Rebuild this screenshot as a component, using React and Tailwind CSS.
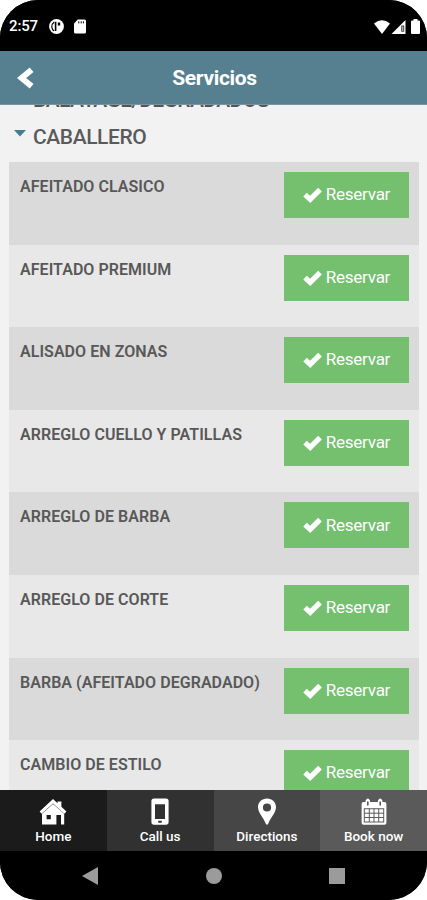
import React from 'react';

const SERVICES = [
  'AFEITADO CLASICO',
  'AFEITADO PREMIUM',
  'ALISADO EN ZONAS',
  'ARREGLO CUELLO Y PATILLAS',
  'ARREGLO DE BARBA',
  'ARREGLO DE CORTE',
  'BARBA (AFEITADO DEGRADADO)',
  'CAMBIO DE ESTILO'
];

const HomeIcon = () => (
  <svg width="28" height="28" viewBox="0 0 28 28" fill="#fff">
    <path d="M14 1 L18.5 5.2 V3.4 H22.4 V8.8 L27.4 13.4 L25.4 15.8 L14 5.6 L2.6 15.8 L0.6 13.4 Z" />
    <path fillRule="evenodd" d="M14 6 L25.2 15.8 V26.6 H22 V17 H17.4 V26.6 H3 V15.8 Z M7.6 17 V21.2 H11.8 V17 Z" />
  </svg>
);

const PhoneIcon = () => (
  <svg width="28" height="28" viewBox="0 0 28 28" fill="#fff">
    <path fillRule="evenodd" d="M8 0.5 H20 Q22.6 0.5 22.6 3 V24 Q22.6 26.8 20 26.8 H8 Q5.4 26.8 5.4 24 V3 Q5.4 0.5 8 0.5 Z M9 6.2 V21 H19 V6.2 Z M12.2 22.8 V24.8 H15.8 V22.8 Z" />
  </svg>
);

const PinIcon = () => (
  <svg width="28" height="28" viewBox="0 0 28 28" fill="#fff">
    <path fillRule="evenodd" d="M14 0.5 C19.2 0.5 23 4.4 23 9.3 C23 14.8 17.5 19.5 15.2 25.8 Q14 27.8 12.8 25.8 C10.5 19.5 5 14.8 5 9.3 C5 4.4 8.8 0.5 14 0.5 Z M14 5.4 A4.1 4.1 0 1 0 14 13.6 A4.1 4.1 0 1 0 14 5.4 Z" />
  </svg>
);

const CalendarIcon = () => (
  <svg width="28" height="28" viewBox="0 0 28 28" fill="#fff">
    <path fillRule="evenodd" d="M3.5 4 H5.6 V2.5 Q7.8 -1.4 10 2.5 V4 H18 V2.5 Q20.2 -1.4 22.4 2.5 V4 H24.5 Q26.4 4 26.4 6 V24.8 Q26.4 26.8 24.5 26.8 H3.5 Q1.6 26.8 1.6 24.8 V6 Q1.6 4 3.5 4 Z M3.8 10.3 V24.4 H24.2 V10.3 Z" />
    <path d="M4.8 11.3 H23.2 V23.4 H4.8 Z" />
    <path d="M4 15.2 H24 M4 19.5 H24 M9.3 10.5 V24 M14 10.5 V24 M18.7 10.5 V24" stroke="#5a5a5a" strokeWidth="1" />
    <path d="M7.8 3.5 V7.4 M20.2 3.5 V7.4" stroke="#5a5a5a" strokeWidth="1.6" />
  </svg>
);

const TABS = [
  { label: 'Home', Icon: HomeIcon, bg: 'bg-[#1b1b1b]' },
  { label: 'Call us', Icon: PhoneIcon, bg: 'bg-[#313131]' },
  { label: 'Directions', Icon: PinIcon, bg: 'bg-[#464646]' },
  { label: 'Book now', Icon: CalendarIcon, bg: 'bg-[#5a5a5a]' }
];

const StatusBar = () => (
  <div className="h-[51px] shrink-0 bg-black text-white flex items-center justify-between pl-[9px] pr-[7px] pt-0.5">
    <div className="flex items-center">
      <span className="w-[40px] text-[15px] leading-none font-medium tracking-[-0.01em] whitespace-nowrap">2:57</span>
      <svg width="15" height="15" viewBox="0 0 15 15" className="block">
        <circle cx="7.5" cy="7.5" r="7.4" fill="#fff" />
        <path d="M5.2 3 Q2.6 5 2.8 8 Q3 10.8 5.2 12" fill="none" stroke="#000" strokeWidth="1.2" />
        <path d="M5.8 2.8 H7.4 V12 H5.8 Z M8.8 3.4 H11.2 V6.6 H8.8 Z" fill="#000" />
      </svg>
      <svg width="12" height="15" viewBox="0 0 12 15" className="block ml-[10px]">
        <path d="M3.8 0.5 H10.5 Q12 0.5 12 2 V13 Q12 14.5 10.5 14.5 H1.5 Q0 14.5 0 13 V4.5 Z" fill="#fff" />
        <path d="M4.8 2.3 V4.4 M7.2 2.3 V4.4 M9.4 2.3 V4.4" stroke="#000" strokeWidth="1" />
      </svg>
    </div>
    <div className="flex items-center">
      <svg width="16" height="14" viewBox="0 0 16 14">
        <path d="M8 14 L0 3.6 Q8 -3 16 3.6 Z" fill="#fff" />
      </svg>
      <svg width="15" height="14" viewBox="0 0 15 14" className="ml-px">
        <path d="M0.5 14 L14.5 0 V14 Z" fill="#fff" />
        <path d="M10.2 5.6 H13.2 V11.8 H10.2 Z" fill="#444" />
        <path d="M11.2 6.4 H12.2 V11 H11.2 Z" fill="#ccc" />
      </svg>
      <svg width="9" height="15" viewBox="0 0 9 15" className="ml-[5px]">
        <path d="M2.5 0 H6.5 V1.5 H8 Q9 1.5 9 2.5 V14 Q9 15 8 15 H1 Q0 15 0 14 V2.5 Q0 1.5 1 1.5 H2.5 Z" fill="#fff" />
      </svg>
    </div>
  </div>
);

const Header = () => (
  <div className="h-[54px] shrink-0 bg-[#567f8f] border-b border-[#7796a2] grid grid-cols-[51px_1fr_49px] items-center text-white">
    <button className="pl-[17px]">
      <svg width="18" height="22" viewBox="0 0 18 22" className="block">
        <path d="M14.6 2.8 L4.6 11 L14.6 19.2" fill="none" stroke="#fff" strokeWidth="6" />
      </svg>
    </button>
    <h1 className="pt-0.5 text-center text-[21px] leading-none font-bold tracking-[-0.016em]">Servicios</h1>
  </div>
);

const ServiceRow = ({ name, dark }) => (
  <div className={`h-[82.6px] shrink-0 flex items-start justify-between pl-[11px] pr-2.5 pt-2.5 ${dark ? 'bg-[#dadada]' : 'bg-[#e8e8e8]'}`}>
    <span className="pt-[5px] text-base leading-5 font-semibold text-[#585858] tracking-[0.003em] whitespace-nowrap">{name}</span>
    <button className="w-[125px] h-[46px] shrink-0 bg-[#74c06f] text-white text-[17px] tracking-[-0.015em] flex items-center justify-center gap-1">
      <svg width="19" height="16" viewBox="0 0 19 16">
        <path d="M2 7.6 L7.2 12.4 L17 2.6" fill="none" stroke="#fff" strokeWidth="5.2" />
      </svg>
      Reservar
    </button>
  </div>
);

export default function App() {
  return (
    <div className="w-[427px] h-[900px] bg-white font-['Roboto',sans-serif]">
      <div className="h-full flex flex-col overflow-hidden rounded-[38px] bg-black">
        <StatusBar />
        <Header />

        <div className="h-[685px] shrink-0 overflow-hidden bg-[#f2f2f2]">
          {/* Categories, scrolled so the first one sits under the header */}
          <div className="-mt-4 flex flex-col">
            <h2 className="h-[36px] pl-[33px] text-[21px] leading-[22px] font-medium tracking-[-0.027em] text-[#555]">BALAYAGE/DEGRADADOS</h2>
            <div className="h-[37px] flex items-start pl-[14px]">
              <svg width="12" height="7" viewBox="0 0 12 7" className="mt-[5px] mr-[7px]">
                <path d="M0 0 H12 L6 6.5 Z" fill="#42808d" />
              </svg>
              <h2 className="text-[21px] leading-6 font-medium tracking-[-0.02em] text-[#5a5a5a]">CABALLERO</h2>
            </div>
            <div className="ml-[9px] mr-2 flex flex-col">
              {SERVICES.map((name, i) => (
                <ServiceRow key={name} name={name} dark={i % 2 === 0} />
              ))}
            </div>
          </div>
        </div>

        {/* Bottom tabs */}
        <div className="h-[61px] shrink-0 grid grid-cols-4">
          {TABS.map(({ label, Icon, bg }) => (
            <button key={label} className={`${bg} flex flex-col items-center pt-2 text-white`}>
              <Icon />
              <span className="mt-0.5 text-[13.5px] leading-4 font-medium whitespace-nowrap">{label}</span>
            </button>
          ))}
        </div>

        {/* Android navigation */}
        <div className="h-[49px] shrink-0 bg-black flex items-center justify-between pl-[82px] pr-[82px]">
          <svg width="16" height="18" viewBox="0 0 16 18"><path d="M16 0 V18 L0 9 Z" fill="#9b9b9b" /></svg>
          <div className="size-4 rounded-full bg-[#9b9b9b]" />
          <div className="size-4 bg-[#9b9b9b]" />
        </div>
      </div>
    </div>
  );
}
